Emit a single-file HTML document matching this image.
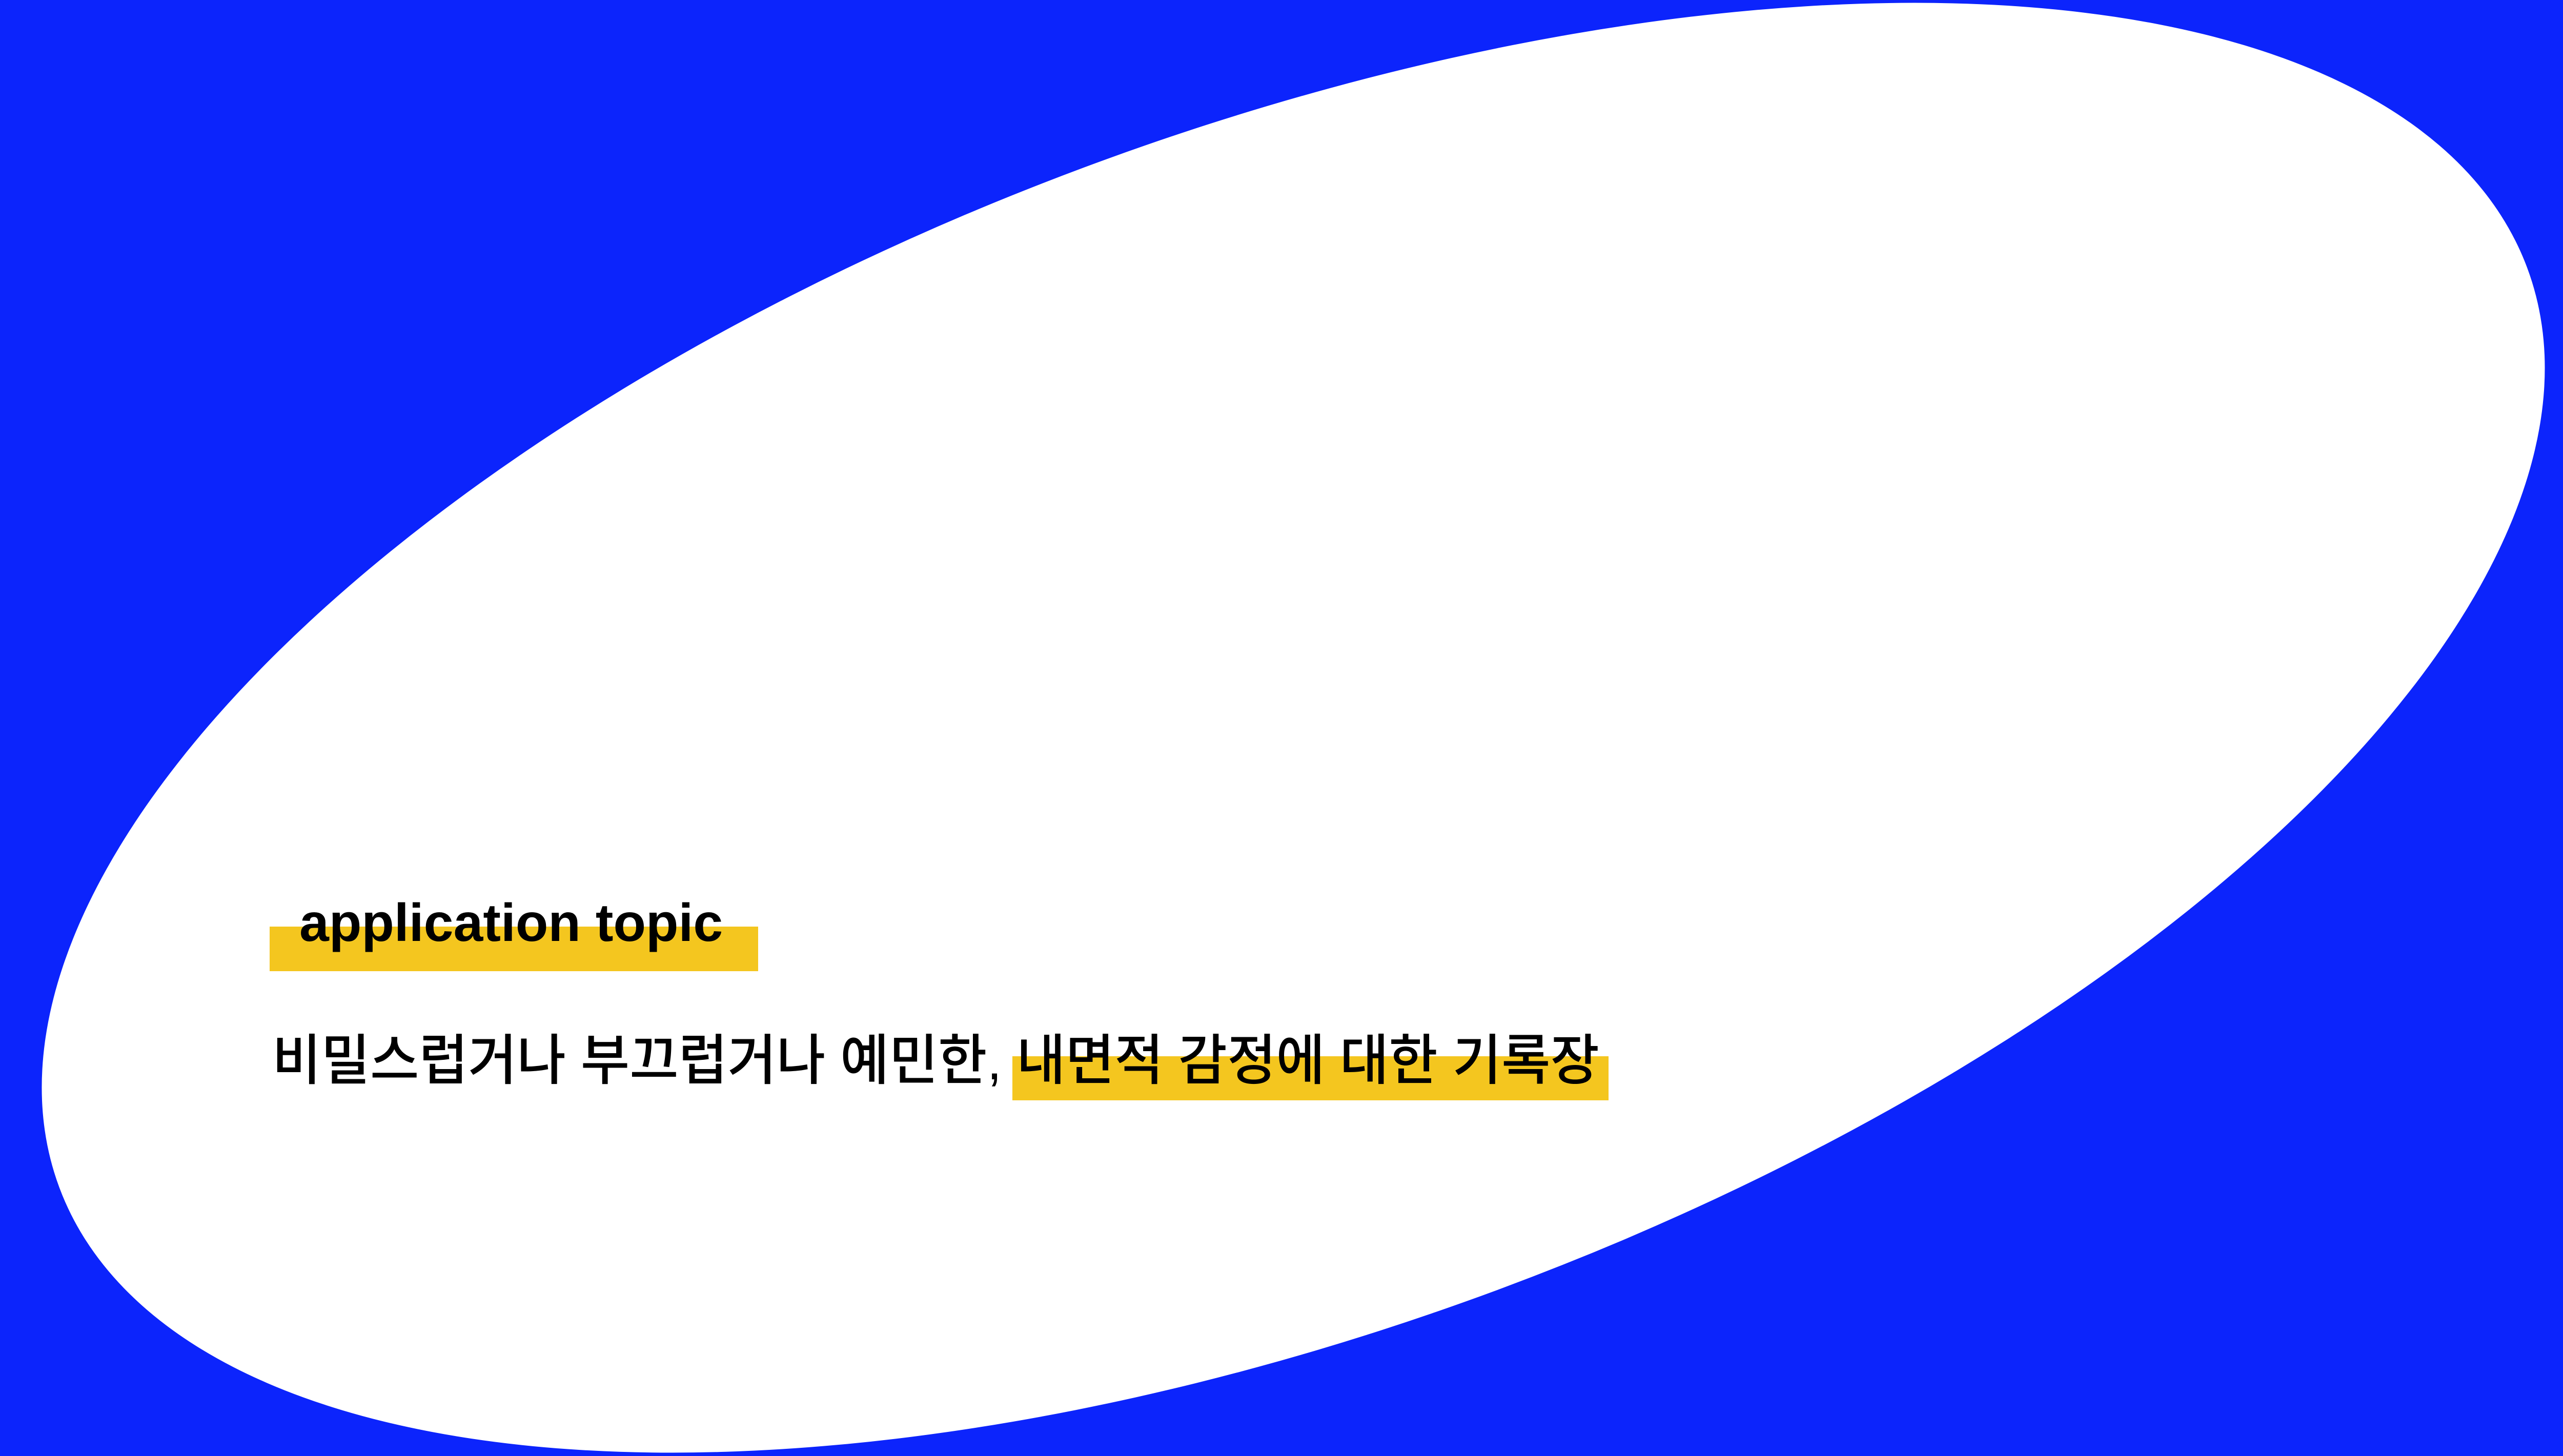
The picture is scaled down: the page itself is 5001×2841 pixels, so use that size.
<!DOCTYPE html>
<html><head><meta charset="utf-8"><style>
html{margin:0;padding:0;width:5001px;height:2841px;overflow:hidden}
body{margin:0;padding:0;width:5001px;height:2841px;position:relative;overflow:hidden;background:#0c24fc}
svg{position:absolute;left:0;top:0;display:block}
.bar{position:absolute;background:#f4c61f}
.t1{position:absolute;left:584px;top:1741px;font-family:"Liberation Sans",Arial,sans-serif;font-weight:bold;font-size:104px;line-height:120px;color:#000;white-space:nowrap}
.t2{position:absolute;left:531px;top:2009px;font-family:"Liberation Sans","Noto Sans CJK KR",sans-serif;font-weight:500;font-size:107px;line-height:120px;color:#000;white-space:nowrap;transform:scaleX(0.97);transform-origin:0 0}
</style></head><body>
<svg width="5001" height="2841" viewBox="0 0 5001 2841">
<ellipse cx="2523" cy="1420" rx="2569" ry="1167" fill="#fff" transform="rotate(-20.44 2523 1420)"/>
</svg>
<div class="bar" style="left:526px;top:1808px;width:953px;height:87px"></div>
<div class="bar" style="left:1975px;top:2061px;width:1163px;height:86px"></div>
<div class="t1">application topic</div>
<div class="t2">비밀스럽거나 부끄럽거나 예민한, 내면적 감정에 대한 기록장</div>
</body></html>
